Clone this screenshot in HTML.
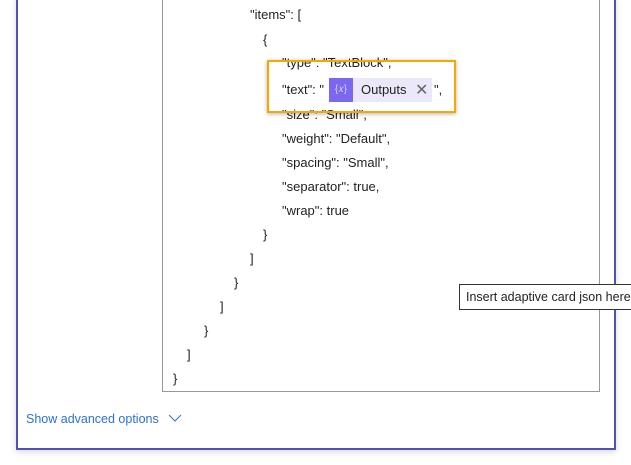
<!DOCTYPE html>
<html><head><style>
body{margin:0;width:631px;height:465px;background:#fff;position:relative;overflow:hidden;font-family:"Liberation Sans",sans-serif;font-size:13px;color:#222;}
.card{position:absolute;left:16px;top:-4px;width:596px;height:452px;border:2px solid #4f52b2;border-top:none;box-shadow:0 2px 6px rgba(0,0,0,.15);background:#fff;}
.box{position:absolute;left:162px;top:-2px;width:436px;height:393px;border:1px solid #999;border-top:none;}
.l{position:absolute;white-space:pre;line-height:16px;}
.hl{position:absolute;left:267px;top:60px;width:185px;height:49px;border:2px solid #f2a900;box-shadow:0 1px 4px rgba(0,0,0,.3);}
.chip{position:absolute;left:329px;top:78px;width:103px;height:24px;background:#ece8fb;}
.ic{position:absolute;left:0;top:0;width:24px;height:24px;background:#7b68ee;color:#d8d0ff;font-size:10px;text-align:center;line-height:24px;}
.tt{position:absolute;left:459px;top:284px;width:180px;height:24px;border:1px solid #333;background:#fff;line-height:24px;padding-left:6px;font-size:12.5px;}
.adv{position:absolute;left:26px;top:412px;color:#2e6fdb;font-size:12.5px;}
</style></head><body>
<div class="card"></div>
<div class="box"></div>
<div class="l" style="left:250px;top:7px">"items": [</div>
<div class="l" style="left:263px;top:32px">{</div>
<div class="l" style="left:282px;top:55px">"type": "TextBlock",</div>
<div class="l" style="left:282px;top:107px">"size": "Small",</div>
<div class="hl"></div>
<div class="l" style="left:282px;top:82px">"text": "</div>
<div class="chip"><div class="ic">{𝑥}</div><span style="position:absolute;left:32px;top:4px">Outputs</span><span style="position:absolute;left:86px;top:2px;color:#666;font-size:16px">✕</span></div>
<div class="l" style="left:434px;top:82px">",</div>
<div class="l" style="left:282px;top:131px">"weight": "Default",</div>
<div class="l" style="left:282px;top:155px">"spacing": "Small",</div>
<div class="l" style="left:282px;top:179px">"separator": true,</div>
<div class="l" style="left:282px;top:203px">"wrap": true</div>
<div class="l" style="left:263px;top:227px">}</div>
<div class="l" style="left:250px;top:251px">]</div>
<div class="l" style="left:234px;top:275px">}</div>
<div class="l" style="left:220px;top:299px">]</div>
<div class="l" style="left:204px;top:323px">}</div>
<div class="l" style="left:187px;top:347px">]</div>
<div class="l" style="left:173px;top:371px">}</div>
<div class="tt">Insert adaptive card json here</div>
<div class="adv">Show advanced options <svg width="14" height="10" style="margin-left:6px" viewBox="0 0 14 10"><path d="M1 2 L7 8 L13 2" fill="none" stroke="#2e6fdb" stroke-width="1"/></svg></div>
</body></html>
